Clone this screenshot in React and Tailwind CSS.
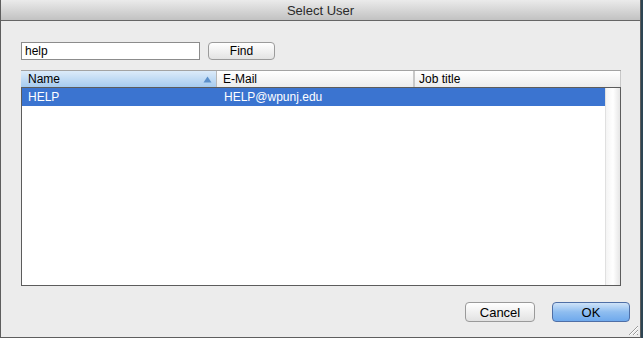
import React, { useState } from "react";

const users = [{ name: "HELP", email: "HELP@wpunj.edu", title: "" }];

const SortArrow = () => (
  <svg width="9" height="7" viewBox="0 0 9 7">
    <path d="M4.5 0.5 L8.5 6.5 L0.5 6.5 Z" fill="#5b8fca" />
  </svg>
);

const ResizeGrip = () => (
  <svg width="12" height="12" viewBox="0 0 12 12" className="absolute right-[1px] bottom-[1px]">
    <path d="M11 2 L2 11 M11 6 L6 11 M11 10 L10 11" stroke="#9a9a9a" strokeWidth="1" />
    <path d="M11 3 L3 11 M11 7 L7 11" stroke="#ffffff" strokeWidth="1" />
  </svg>
);

const App = () => {
  const [query, setQuery] = useState("help");

  return (
    <div
      className="w-[643px] h-[338px] bg-[#2d4553] flex"
      style={{ fontFamily: '"Liberation Sans", Arial, sans-serif' }}
    >
      <div className="relative w-[641px] h-[338px] bg-[#ececec] border-l border-r border-b border-[#5e5e5e] flex flex-col">
        {/* title bar */}
        <div className="h-[21px] shrink-0 bg-gradient-to-b from-[#ebebeb] to-[#c2c2c2] border-b border-[#666666] flex items-center justify-center">
          <span className="text-[13px] text-[#2a2a2a] pt-[1px]">Select User</span>
        </div>

        {/* search */}
        <div className="flex items-center mt-[21px] ml-[20px] gap-[8px]">
          <input
            value={query}
            onChange={(e) => setQuery(e.target.value)}
            className="w-[179px] h-[18px] bg-white border border-[#8c8c8c] px-[3px] text-[12px] text-black outline-none"
          />
          <button className="w-[67px] h-[18px] rounded-[4px] border border-[#9b9b9b] bg-gradient-to-b from-white to-[#e3e3e3] text-[12px] text-black leading-none">
            Find
          </button>
        </div>

        {/* table */}
        <div className="ml-[20px] mt-[10px] w-[600px] flex flex-col">
          <div className="h-[17px] flex border-t border-[#a3a3a3] bg-gradient-to-b from-white to-[#ececec] text-[12px] text-black">
            <div className="w-[196px] flex items-center justify-between pl-[7px] pr-[4px] bg-gradient-to-b from-[#dcebf9] to-[#a6cbef] border-r border-[#b8b8b8]">
              <span>Name</span>
              <SortArrow />
            </div>
            <div className="w-[198px] flex items-center pl-[6px] border-r-2 border-[#c8c8c8]">E-Mail</div>
            <div className="flex-1 flex items-center pl-[4px] border-r border-[#c8c8c8]">Job title</div>
          </div>
          <div className="h-[199px] w-[600px] flex border border-[#5c5c5c] bg-white">
            <div className="flex-1 flex flex-col">
              {users.map((u) => (
                <div key={u.email} className="h-[18px] flex items-center bg-[#3b74d0] text-[12px] text-white">
                  <div className="w-[196px] pl-[6px]">{u.name}</div>
                  <div className="w-[197px] pl-[6px]">{u.email}</div>
                  <div className="flex-1">{u.title}</div>
                </div>
              ))}
            </div>
            <div className="w-[15px] border-l border-[#e0e0e0] bg-gradient-to-r from-[#f4f4f4] via-white to-[#e6e6e6]" />
          </div>
        </div>

        {/* buttons */}
        <div className="flex justify-end gap-[17px] mt-[16px] mr-[10px]">
          <button className="w-[70px] h-[20px] rounded-[4px] border border-[#9a9a9a] bg-gradient-to-b from-white to-[#e2e2e2] text-[13px] text-black leading-none">
            Cancel
          </button>
          <button className="w-[78px] h-[20px] rounded-[4px] border border-[#4f6fa6] bg-gradient-to-b from-[#cfe3f8] via-[#8ebdf0] to-[#6fa9ec] text-[13px] text-black leading-none">
            OK
          </button>
        </div>

        <ResizeGrip />
      </div>
    </div>
  );
};

export default App;
